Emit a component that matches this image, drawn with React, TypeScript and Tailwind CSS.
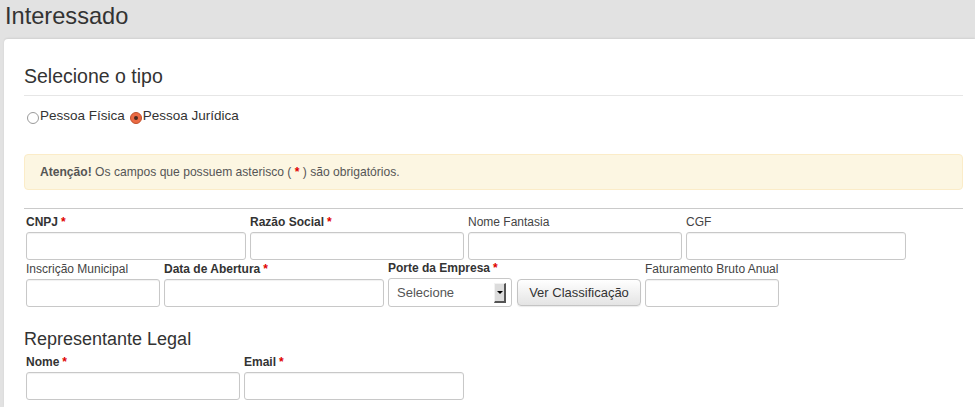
const font = { fontFamily: '"Liberation Sans", Arial, sans-serif' }

function Req() {
  return <span className="text-[#e00000] ml-[3px]">*</span>
}

function Field({ label, bold, req, w }: { label: string; bold?: boolean; req?: boolean; w: string }) {
  return (
    <div className={`flex flex-col ${w}`}>
      <label className={`text-[12px] leading-[14px] h-[14px] whitespace-nowrap ${bold ? 'font-bold text-[#333]' : 'text-[#444]'}`}>
        {label}
        {req && <Req />}
      </label>
      <input className="mt-[3px] h-[28px] w-full rounded-[3px] border border-[#c8c8c8] bg-white shadow-[inset_0_1px_1px_rgba(0,0,0,0.06)] outline-none" />
    </div>
  )
}

export default function App() {
  return (
    <div className="w-[975px] h-[407px] overflow-hidden bg-[#e2e2e2] text-[#333]" style={font}>
      {/* Cabeçalho */}
      <div className="h-[39px] pl-[5px] pt-[1px]">
        <h1 className="text-[23.6px] leading-[30px] text-[#333]">Interessado</h1>
      </div>

      {/* Card */}
      <div className="ml-[4px] h-[368px] bg-white rounded-tl-[4px] shadow-[0_-1px_2px_rgba(0,0,0,0.08)] pl-[20px] pr-[12px] pt-[25px]">
        <h2 className="text-[19.5px] leading-[24px] pb-[7px] border-b border-[#e6e6e6]">Selecione o tipo</h2>

        <div className="mt-[12px] flex items-center text-[13.5px] leading-[16px] text-[#333] pl-[3px]">
          <span className="mt-[3px] w-[12px] h-[12px] rounded-full border border-[#9a9a9a] bg-white" />
          <span className="ml-[1px]">Pessoa Física</span>
          <span className="ml-[5px] mt-[3px] w-[12px] h-[12px] rounded-full border border-[#c0502c] bg-[#eb6a43] flex items-center justify-center">
            <span className="w-[4px] h-[4px] rounded-full bg-[#4a2a20]" />
          </span>
          <span className="ml-[1px]">Pessoa Jurídica</span>
        </div>

        <div className="mt-[30px] h-[36px] rounded-[4px] border border-[#fbecc8] bg-[#fcf6e2] pl-[15px] pt-[8px] text-[12.1px] leading-[18px] text-[#555]">
          <b className="text-[#555]">Atenção!</b> Os campos que possuem asterisco ( <span className="text-[#e00000] font-bold">*</span> ) são obrigatórios.
        </div>

        <div className="mt-[18px] border-t border-[#cacaca] pl-[2px] pt-[6px]">
          <div className="flex gap-[4px]">
            <Field label="CNPJ" bold req w="w-[220px]" />
            <Field label="Razão Social" bold req w="w-[214px]" />
            <Field label="Nome Fantasia" w="w-[214px]" />
            <Field label="CGF" w="w-[220px]" />
          </div>

          <div className="mt-[1px] flex gap-[4px] items-end">
            <Field label="Inscrição Municipal" w="w-[134px]" />
            <Field label="Data de Abertura" bold req w="w-[220px]" />
            <div className="flex flex-col w-[124px]">
              <label className="text-[12px] leading-[14px] h-[14px] font-bold text-[#333] whitespace-nowrap">
                Porte da Empresa<Req />
              </label>
              <div className="mt-[3px] h-[29px] rounded-[3px] border border-[#c8c8c8] bg-white flex items-center justify-between pl-[8px] pr-[5px]">
                <span className="text-[13px] text-[#555]">Selecione</span>
                <span className="w-[12px] h-[20px] bg-[#dcdcdc] border-t border-l border-t-[#f2f2f2] border-l-[#f2f2f2] border-r-2 border-b-2 border-r-[#555] border-b-[#555] flex items-center justify-center">
                  <span className="w-0 h-0 border-l-[3px] border-r-[3px] border-t-[3px] border-l-transparent border-r-transparent border-t-black" />
                </span>
              </div>
            </div>
            <button className="ml-[1px] mb-[1px] w-[124px] h-[27px] rounded-[4px] border border-[#c4c4c4] bg-gradient-to-b from-white to-[#e4e4e4] text-[13px] text-[#333] shadow-[0_1px_1px_rgba(0,0,0,0.08)]">
              Ver Classificação
            </button>
            <Field label="Faturamento Bruto Anual" w="w-[134px]" />
          </div>
        </div>

        <h2 className="mt-[21px] text-[18px] leading-[22px]">Representante Legal</h2>
        <div className="mt-[5px] pl-[2px] flex gap-[4px]">
          <Field label="Nome" bold req w="w-[214px]" />
          <Field label="Email" bold req w="w-[220px]" />
        </div>
      </div>
    </div>
  )
}
